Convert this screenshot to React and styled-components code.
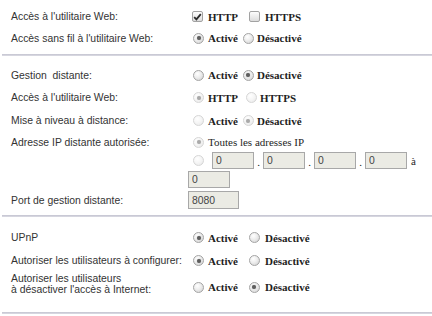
import React from "react";
import styled, { createGlobalStyle } from "styled-components";

const Global = createGlobalStyle`
  html, body { margin: 0; padding: 0; background: #fff; }
  body { font-family: "Liberation Sans", Arial, sans-serif; }
`;

const Page = styled.div`
  width: 432px;
  height: 316px;
  overflow: hidden;
  background: #fff;
`;

const Section = styled.section`
  padding: ${(p) => p.$pt}px 0 ${(p) => p.$pb}px 11px;
  display: flex;
  flex-direction: column;
`;

const Divider = styled.div`
  height: 2px;
  margin-left: 2px;
  background: linear-gradient(#c3c3d0, #dcdce4);
`;

const Row = styled.div`
  display: grid;
  grid-template-columns: 177px 1fr;
  align-items: ${(p) => p.$align || "center"};
  height: ${(p) => p.$h}px;
  margin-top: ${(p) => p.$mt || 0}px;
`;

const Label = styled.div`
  font-family: "Liberation Sans", Arial, sans-serif;
  font-size: 10.4px;
  line-height: 11px;
  color: #333;
  white-space: nowrap;
  margin-top: ${(p) => p.$mt || 0}px;
  align-self: ${(p) => p.$self || "auto"};
`;

const Controls = styled.div`
  display: flex;
  align-items: center;
  height: 100%;
`;

const Stack = styled.div`
  display: flex;
  flex-direction: column;
`;

const Line = styled.div`
  display: flex;
  align-items: center;
  height: ${(p) => p.$h}px;
  margin-top: ${(p) => p.$mt || 0}px;
`;

const Text = styled.span`
  font-family: "Liberation Serif", "Times New Roman", serif;
  font-size: 11px;
  font-weight: ${(p) => (p.$normal ? 400 : 700)};
  color: #1e1e1e;
  white-space: nowrap;
  margin-right: ${(p) => p.$mr || 0}px;
`;

const RadioDot = styled.span`
  position: relative;
  display: inline-block;
  box-sizing: border-box;
  flex-shrink: 0;
  width: 11px;
  height: 11px;
  border-radius: 50%;
  margin: 0 ${(p) => p.$mr ?? 4}px 0 ${(p) => p.$ml ?? 5}px;
  border: 1px solid ${(p) => (p.$disabled ? "#d6d6d6" : "#a4a4a4")};
  background: ${(p) =>
    p.$disabled
      ? "radial-gradient(circle at 38% 32%, #ffffff 0%, #f6f6f6 45%, #e6e6e6 100%)"
      : "radial-gradient(circle at 38% 32%, #ffffff 0%, #ededed 45%, #cdcdcd 100%)"};
  &::after {
    content: "";
    display: ${(p) => (p.$checked ? "block" : "none")};
    position: absolute;
    left: 50%;
    top: 50%;
    width: 4px;
    height: 4px;
    margin: -2px 0 0 -2px;
    border-radius: 50%;
    background: ${(p) => (p.$disabled ? "#a9a9a9" : "#5e5e5e")};
    box-shadow: 0 0 1px ${(p) => (p.$disabled ? "#c8c8c8" : "#8a8a8a")};
  }
`;

const Box = styled.span`
  display: inline-flex;
  align-items: center;
  justify-content: center;
  box-sizing: border-box;
  flex-shrink: 0;
  width: 11px;
  height: 11px;
  margin: 0 5px 0 4px;
  border: 1px solid #a2a2a2;
  border-radius: 2px;
  background: linear-gradient(#fdfdfd, #dcdcdc);
`;

const Field = styled.input`
  box-sizing: border-box;
  width: ${(p) => p.$w}px;
  height: ${(p) => p.$hh || 17}px;
  margin: 0;
  padding: 0 0 0 3px;
  border: 1px solid #a8a8a8;
  background: #ebebe4;
  font-family: "Liberation Sans", Arial, sans-serif;
  font-size: 10.4px;
  color: #444;
  outline: none;
`;

const Dot = styled.span`
  width: 9px;
  text-align: center;
  font-family: "Liberation Serif", "Times New Roman", serif;
  font-size: 11px;
  color: #222;
  align-self: flex-end;
  line-height: 14px;
`;

function Radio({ checked, disabled, ml, mr }) {
  return <RadioDot $checked={checked} $disabled={disabled} $ml={ml} $mr={mr} />;
}

function Check({ checked }) {
  return (
    <Box>
      {checked && (
        <svg width="9" height="8" viewBox="0 0 9 8">
          <path d="M1.2 4.2 L3.4 6.4 L7.8 1.2" fill="none" stroke="#2a2a2a" strokeWidth="1.8" />
        </svg>
      )}
    </Box>
  );
}

function OnOff({ on, disabled, wide }) {
  return (
    <Controls>
      <Radio checked={on} disabled={disabled} />
      <Text $mr={wide ? 6 : 0}>Activé</Text>
      <Radio checked={!on} disabled={disabled} ml={wide ? 5 : 5} mr={wide ? 5 : 3} />
      <Text>Désactivé</Text>
    </Controls>
  );
}

export default function App() {
  return (
    <Page>
      <Global />
      <Section $pt={6} $pb={5}>
        <Row $h={21}>
          <Label>Accès à l'utilitaire Web:</Label>
          <Controls>
            <Check checked />
            <Text $mr={7}>HTTP</Text>
            <Check />
            <Text>HTTPS</Text>
          </Controls>
        </Row>
        <Row $h={22}>
          <Label>Accès sans fil à l'utilitaire Web:</Label>
          <OnOff on />
        </Row>
      </Section>
      <Divider />
      <Section $pt={8} $pb={6}>
        <Row $h={22}>
          <Label>Gestion&nbsp; distante:</Label>
          <OnOff on={false} />
        </Row>
        <Row $h={23}>
          <Label>Accès à l'utilitaire Web:</Label>
          <Controls>
            <Radio checked disabled />
            <Text $mr={3}>HTTP</Text>
            <Radio disabled ml={5} mr={3} />
            <Text>HTTPS</Text>
          </Controls>
        </Row>
        <Row $h={23}>
          <Label>Mise à niveau à distance:</Label>
          <OnOff on={false} disabled />
        </Row>
        <Row $h={56} $align="start">
          <Label $mt={5}>Adresse IP distante autorisée:</Label>
          <Stack>
            <Line $h={20}>
              <Radio checked disabled />
              <Text $normal>Toutes les adresses IP</Text>
            </Line>
            <Line $h={17}>
              <Radio disabled mr={8} />
              <Field $w={42} value="0" readOnly />
              <Dot>.</Dot>
              <Field $w={42} value="0" readOnly />
              <Dot>.</Dot>
              <Field $w={42} value="0" readOnly />
              <Dot>.</Dot>
              <Field $w={42} value="0" readOnly />
              <Text $normal style={{ marginLeft: 4 }}>à</Text>
            </Line>
            <Line $h={17} $mt={2}>
              <Field $w={42} value="0" readOnly />
            </Line>
          </Stack>
        </Row>
        <Row $h={18} $mt={3}>
          <Label>Port de gestion distante:</Label>
          <Controls>
            <Field $w={51} $hh={18} value="8080" readOnly />
          </Controls>
        </Row>
      </Section>
      <Divider />
      <Section $pt={9} $pb={10}>
        <Row $h={23}>
          <Label>UPnP</Label>
          <OnOff on wide />
        </Row>
        <Row $h={23}>
          <Label>Autoriser les utilisateurs à configurer:</Label>
          <OnOff on wide />
        </Row>
        <Row $h={30}>
          <Label $self="start" $mt={1}>
            Autoriser les utilisateurs
            <br />à désactiver l'accès à Internet:
          </Label>
          <OnOff on={false} wide />
        </Row>
      </Section>
      <Divider />
    </Page>
  );
}
